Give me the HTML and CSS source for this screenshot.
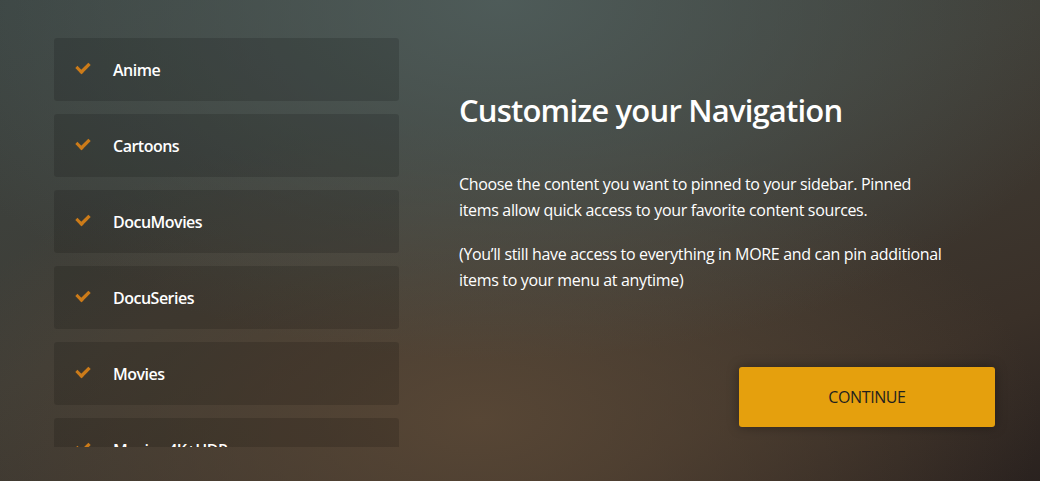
FILE: index.html
```html
<!DOCTYPE html>
<html lang="en">
<head>
    <meta charset="UTF-8">
    <meta name="viewport" content="width=device-width, initial-scale=1.0">
    <title>Customize your Navigation</title>
    <link rel="stylesheet" href="styles.css">
</head>
<body>
    <div class="setup">
        <div class="source-list">
            <div class="source-item"><span class="check"></span>Anime</div>
            <div class="source-item"><span class="check"></span>Cartoons</div>
            <div class="source-item"><span class="check"></span>DocuMovies</div>
            <div class="source-item"><span class="check"></span>DocuSeries</div>
            <div class="source-item"><span class="check"></span>Movies</div>
            <div class="source-item"><span class="check"></span>Movies 4K+HDR</div>
        </div>

        <div class="intro">
            <h1>Customize your Navigation</h1>
            <p>Choose the content you want to pinned to your sidebar. Pinned items allow quick access to your favorite content sources.</p>
            <p>(You’ll still have access to everything in MORE and can pin additional items to your menu at anytime)</p>
            <button type="button" class="continue-btn">CONTINUE</button>
        </div>
    </div>
</body>
</html>
```

FILE: styles.css
```css
html, body {
    height: 100%;
}

body {
    margin: 0;
    font-family: 'Open Sans', 'Noto Sans', sans-serif;
    color: #fff;
    overflow: hidden;
    background-color: #3c3832;
    background-image:
        radial-gradient(ellipse 620px 360px at 500px 0px, rgba(80, 94, 92, 0.9), rgba(80, 94, 92, 0) 100%),
        radial-gradient(ellipse 560px 300px at 480px 420px, rgba(90, 72, 54, 0.9), rgba(90, 72, 54, 0) 100%),
        linear-gradient(160deg, #3b4442 0%, #3f3d36 45%, #3a3028 80%, #2a221f 100%);
}

.setup {
    display: flex;
    height: 100%;
    padding: 38px 45px 0 54px;
    box-sizing: border-box;
}

/* Source list */
.source-list {
    width: 345px;
    height: 409px;
    overflow: hidden;
    display: flex;
    flex-direction: column;
    gap: 13px;
    flex-shrink: 0;
}

.source-item {
    display: flex;
    align-items: center;
    flex-shrink: 0;
    height: 63px;
    padding-left: 24px;
    background: rgba(0, 0, 0, 0.14);
    border-radius: 3px;
    font-size: 16px;
    font-weight: 600;
    letter-spacing: -0.5px;
}

.check {
    width: 8px;
    height: 13px;
    margin: -6px 26px 0 1px;
    border-right: 3px solid #cc7b19;
    border-bottom: 3px solid #cc7b19;
    transform: rotate(45deg) scaleX(1.1);
    box-sizing: border-box;
}

/* Intro text */
.intro {
    flex: 1;
    display: flex;
    flex-direction: column;
    padding-left: 60px;
}

.intro h1 {
    margin: 53px 0 0;
    font-size: 31px;
    font-weight: 600;
    line-height: 38px;
    letter-spacing: -0.8px;
}

.intro p {
    max-width: 490px;
    margin: 42px 0 0;
    font-size: 16px;
    line-height: 26px;
    letter-spacing: -0.33px;
}

.intro p + p {
    margin-top: 18px;
}

.continue-btn {
    align-self: flex-end;
    width: 256px;
    height: 60px;
    margin-top: 74px;
    background: #e5a00d;
    color: #1f1f1f;
    border: none;
    border-radius: 3px;
    font-family: inherit;
    font-size: 16px;
    letter-spacing: -0.4px;
    box-shadow: 0 0 12px rgba(0, 0, 0, 0.35);
    cursor: pointer;
}
```
